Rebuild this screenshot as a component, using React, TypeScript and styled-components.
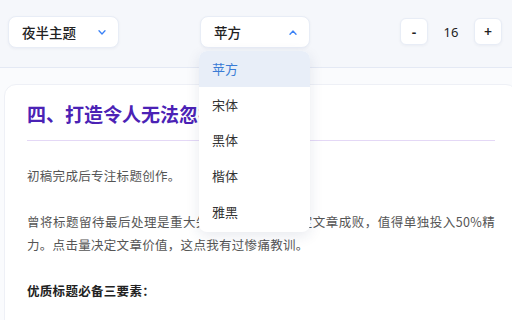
import React from "react";
import styled, { createGlobalStyle } from "styled-components";

const GlobalStyle = createGlobalStyle`
  html, body { margin: 0; padding: 0; }
  body {
    background: #f8f9fc;
    font-family: "Noto Sans CJK SC", "Noto Sans", sans-serif;
    overflow: hidden;
  }
`;

const Page = styled.div`
  width: 512px;
  height: 320px;
  overflow: hidden;
  position: relative;
  background: linear-gradient(#f7f8fc, #fafbfd 40px);
`;

const Toolbar = styled.div`
  display: flex;
  align-items: flex-start;
  padding: 16px 10px 0 8px;
  box-sizing: border-box;
  height: 68px;
  background: #f5f7fb;
  border-bottom: 1px solid #e4e9f4;
  position: relative;
  z-index: 2;
`;

const SelectWrap = styled.div<{ $ml?: number }>`
  position: relative;
  margin-left: ${(p) => p.$ml ?? 0}px;
`;

const SelectBox = styled.div<{ $w: number }>`
  width: ${(p) => p.$w}px;
  height: 32px;
  box-sizing: border-box;
  background: #fff;
  border: 1px solid #e8edf6;
  border-radius: 8px;
  box-shadow: 0 1px 3px rgba(30, 50, 100, 0.05);
  display: flex;
  align-items: center;
  justify-content: space-between;
  padding: 0 12px 0 13px;
  font-size: 13.5px;
  font-weight: 500;
  color: #222;
`;

const Menu = styled.div`
  position: absolute;
  top: 35px;
  left: -1px;
  width: 111px;
  background: #fff;
  border-radius: 8px;
  box-shadow: 0 4px 14px rgba(30, 50, 100, 0.1);
  overflow: hidden;
  padding-bottom: 3px;
`;

const MenuItem = styled.div<{ $active?: boolean }>`
  height: 35.6px;
  display: flex;
  align-items: center;
  padding-left: 13px;
  font-size: 13px;
  color: ${(p) => (p.$active ? "#3a7bd5" : "#333")};
  background: ${(p) => (p.$active ? "#e8eef8" : "#fff")};
`;

const SizeGroup = styled.div`
  margin-left: auto;
  margin-top: 2px;
  display: flex;
  align-items: center;
`;

const SizeBtn = styled.div`
  width: 28px;
  height: 27px;
  box-sizing: border-box;
  background: #fff;
  border: 1px solid #e8edf6;
  border-radius: 6px;
  box-shadow: 0 1px 3px rgba(30, 50, 100, 0.05);
  display: flex;
  align-items: center;
  justify-content: center;
  font-family: "Noto Sans", sans-serif;
  font-size: 14px;
  font-weight: 600;
  color: #222;
`;

const SizeValue = styled.div`
  width: 46px;
  text-align: center;
  font-family: "Noto Sans", sans-serif;
  font-size: 13px;
  color: #222;
`;

const Main = styled.div`
  padding: 16px 0 0 4px;
`;

const Card = styled.div`
  width: 514px;
  box-sizing: border-box;
  background: #fff;
  border: 1px solid #eef0f6;
  border-radius: 12px;
  padding: 15px 22px 20px;
  height: 260px;
`;

const Title = styled.h2`
  margin: 0;
  font-size: 19px;
  line-height: 28px;
  font-weight: 700;
  color: #4b22b5;
  padding-bottom: 12px;
  border-bottom: 1px solid #e4d8f6;
  white-space: nowrap;
  overflow: hidden;
`;

const Para = styled.p<{ $bold?: boolean }>`
  margin: 23px 0 0;
  font-size: 12.5px;
  line-height: 23px;
  letter-spacing: 0.3px;
  text-align: justify;
  color: ${(p) => (p.$bold ? "#222" : "#555")};
  font-weight: ${(p) => (p.$bold ? 700 : 400)};
`;

const Chevron = ({ up }: { up?: boolean }) => (
  <svg width="8" height="5" viewBox="0 0 8 5" fill="none">
    <path
      d={up ? "M1 4.2L4 1L7 4.2" : "M1 0.8L4 4L7 0.8"}
      stroke="#3b82f6"
      strokeWidth="1.3"
      strokeLinecap="round"
      strokeLinejoin="round"
    />
  </svg>
);

const fonts = ["苹方", "宋体", "黑体", "楷体", "雅黑"];

export default function App() {
  return (
    <Page>
      <GlobalStyle />
      <Toolbar>
        <SelectWrap>
          <SelectBox $w={111}>
            <span>夜半主题</span>
            <Chevron />
          </SelectBox>
        </SelectWrap>
        <SelectWrap $ml={81}>
          <SelectBox $w={110}>
            <span>苹方</span>
            <Chevron up />
          </SelectBox>
          <Menu>
            {fonts.map((f, i) => (
              <MenuItem key={f} $active={i === 0}>
                {f}
              </MenuItem>
            ))}
          </Menu>
        </SelectWrap>
        <SizeGroup>
          <SizeBtn>-</SizeBtn>
          <SizeValue>16</SizeValue>
          <SizeBtn>+</SizeBtn>
        </SizeGroup>
      </Toolbar>
      <Main>
        <Card>
          <Title>四、打造令人无法忽视的标题</Title>
          <Para>初稿完成后专注标题创作。</Para>
          <Para>
            曾将标题留待最后处理是重大失误，因为标题决定文章成败，值得单独投入50%精力。点击量决定文章价值，这点我有过惨痛教训。
          </Para>
          <Para $bold>优质标题必备三要素：</Para>
        </Card>
      </Main>
    </Page>
  );
}
